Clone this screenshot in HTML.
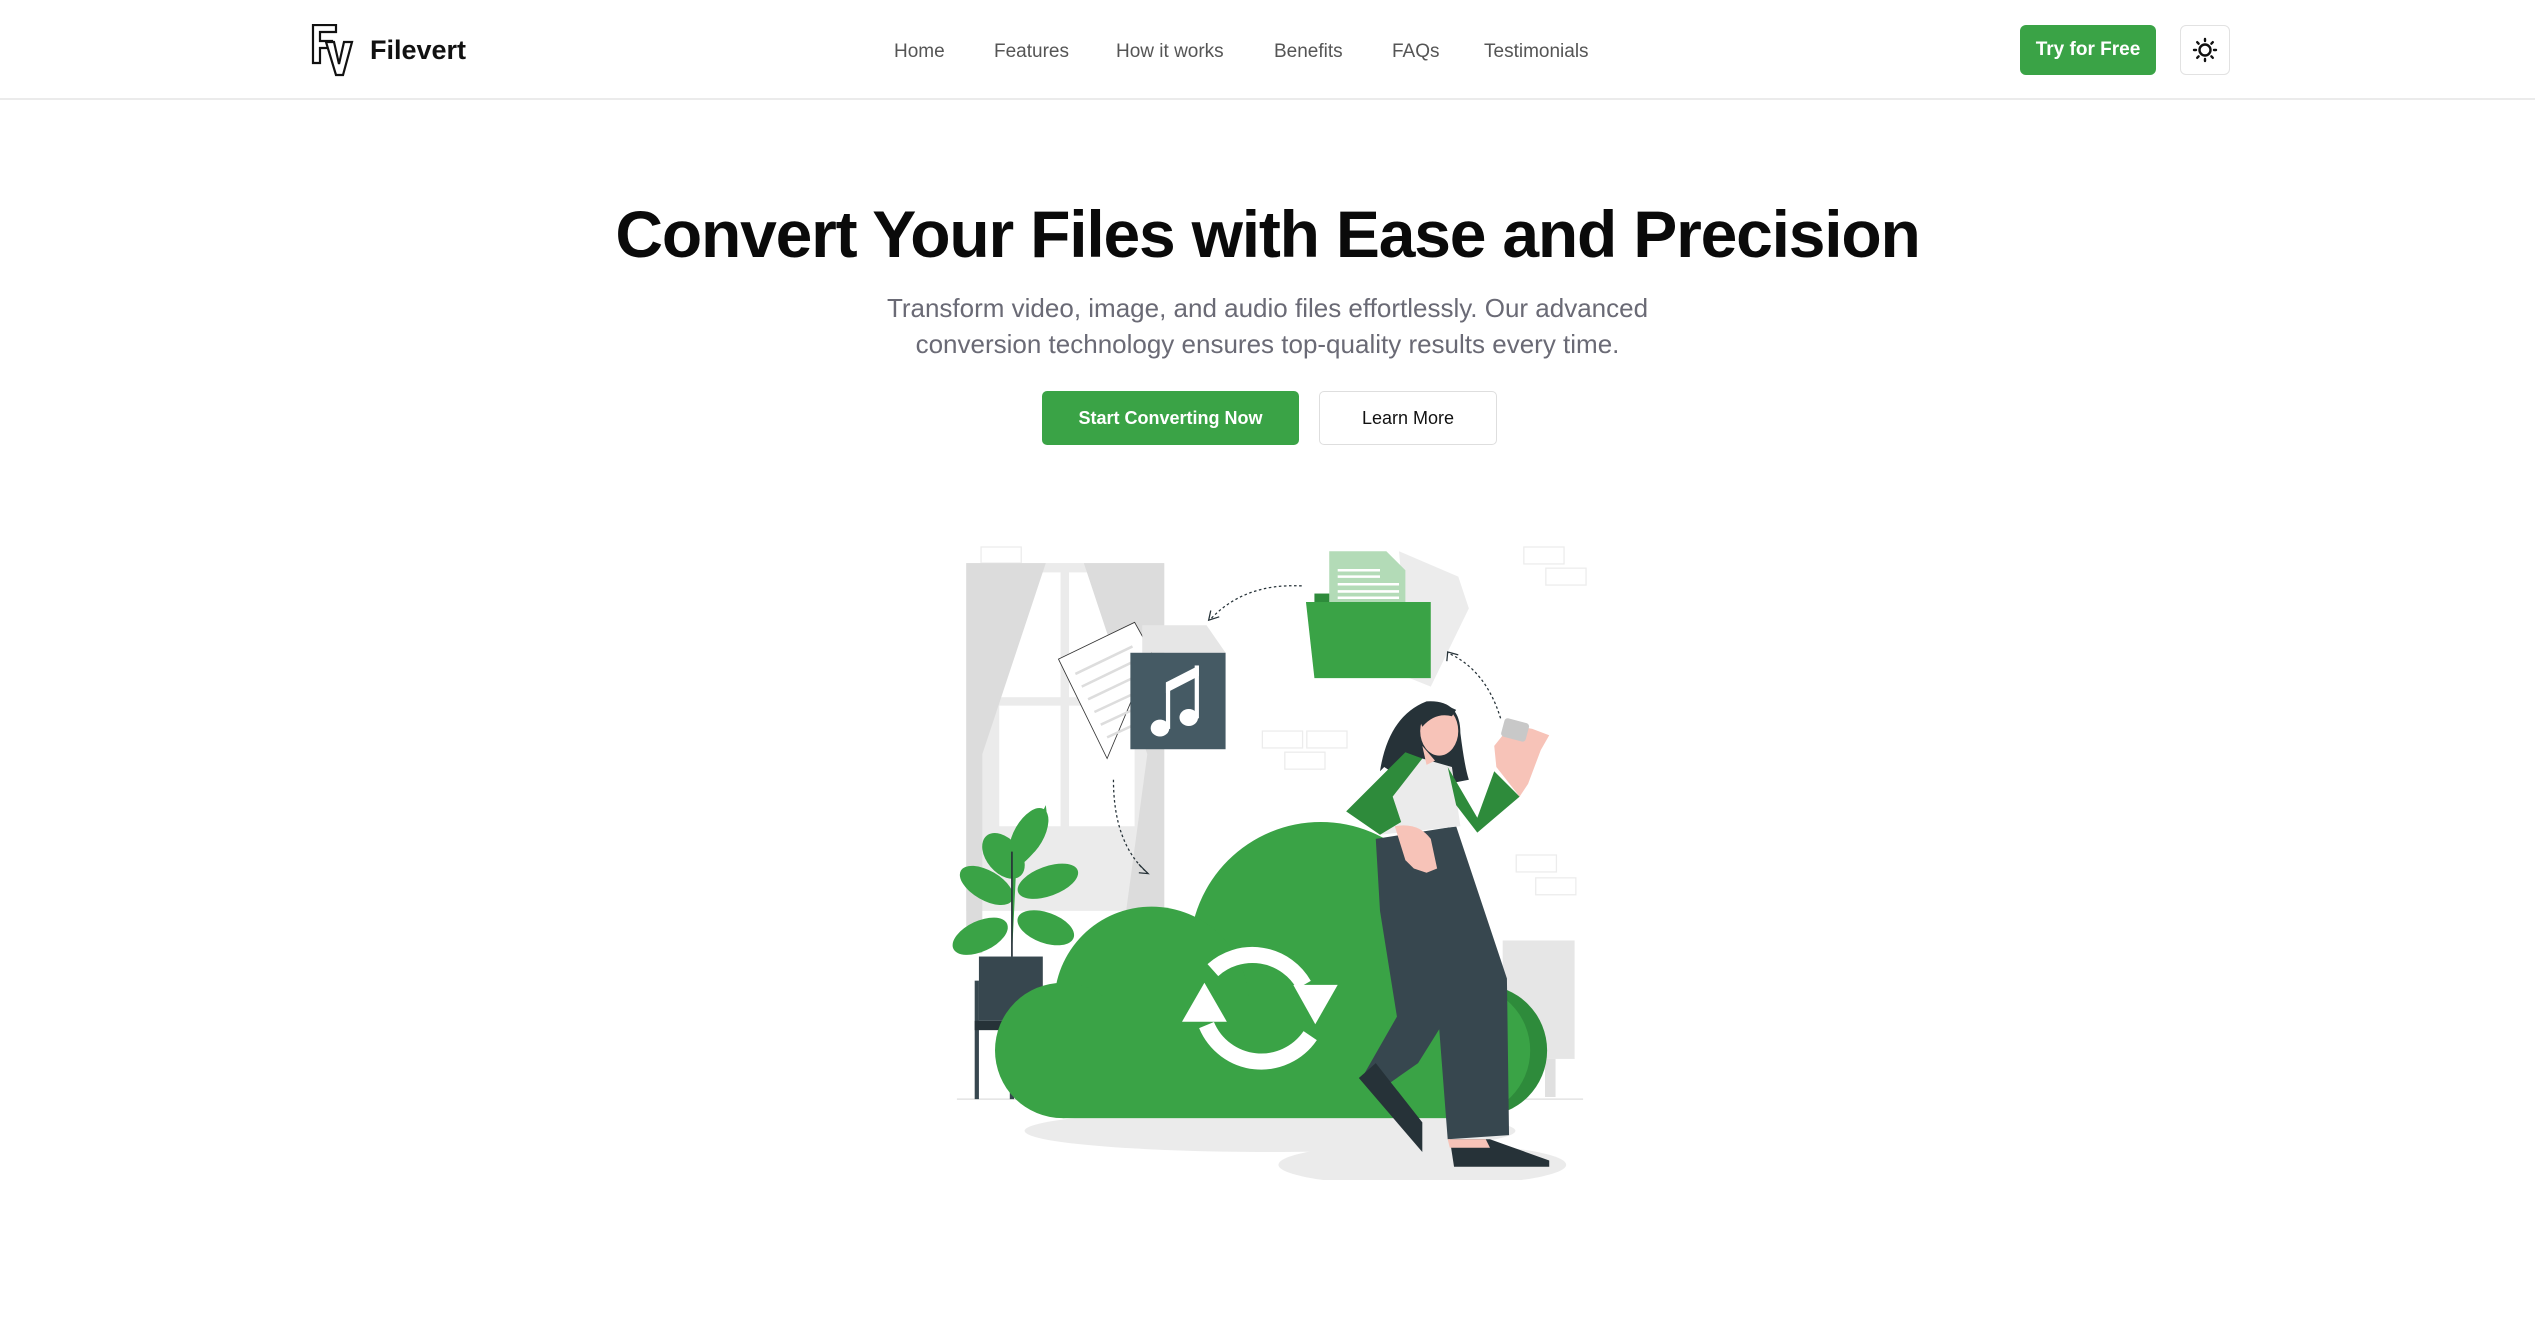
<!DOCTYPE html>
<html><head><meta charset="utf-8"><style>
*{margin:0;padding:0;box-sizing:border-box}
body{width:2535px;height:1324px;background:#fff;font-family:"Liberation Sans",sans-serif;position:relative;overflow:hidden}
.hdr{position:absolute;left:0;top:0;width:2535px;height:100px;border-bottom:2px solid #ebebeb}
.brand{position:absolute;left:370px;top:35px;font-size:27px;font-weight:bold;color:#111}
.nav a{position:absolute;top:41px;font-size:19px;color:#555;text-decoration:none}
.try{position:absolute;left:2020px;top:25px;width:136px;height:50px;background:#3aa346;border-radius:6px;color:#fff;font-size:19px;font-weight:bold;text-align:center;line-height:50px}
.theme{position:absolute;left:2180px;top:25px;width:50px;height:50px;border:1px solid #e2e2e2;border-radius:6px}
h1{position:absolute;left:0;width:2535px;top:196px;text-align:center;font-size:66px;font-weight:900;color:#0a0a0a;letter-spacing:-1.2px}
.sub{position:absolute;left:0;width:2535px;top:290px;text-align:center;font-size:26px;line-height:36px;color:#6a6a75}
.b1{position:absolute;left:1042px;top:391px;width:257px;height:54px;background:#3aa346;border-radius:5px;color:#fff;font-size:18px;text-align:center;line-height:54px;font-weight:bold}
.b2{position:absolute;left:1319px;top:391px;width:178px;height:54px;border:1px solid #dedede;border-radius:5px;color:#111;font-size:18px;text-align:center;line-height:52px}
</style></head><body>
<div class="hdr">
<svg style="position:absolute;left:310px;top:24px" width="50" height="54" viewBox="0 0 50 54"><path d="M3 1H26V8H10V17H22V24H10V39H3Z" fill="#fff" stroke="#111" stroke-width="2.2"/><path d="M16 18H24L29 40L34 18H42L33 51H26Z" fill="#fff" stroke="#111" stroke-width="2.2"/></svg>
<div class="brand">Filevert</div>
<div class="nav"><a style="left:894px">Home</a><a style="left:994px">Features</a><a style="left:1116px">How it works</a><a style="left:1274px">Benefits</a><a style="left:1392px">FAQs</a><a style="left:1484px">Testimonials</a></div>
<div class="try">Try for Free</div>
<div class="theme"><svg width="48" height="48" viewBox="0 0 48 48"><circle cx="24" cy="24" r="5.5" fill="none" stroke="#111" stroke-width="2.4"/><g stroke="#111" stroke-width="2.4" stroke-linecap="round"><path d="M24 13v2M24 33v2M13 24h2M33 24h2M16.2 16.2l1.4 1.4M30.4 30.4l1.4 1.4M16.2 31.8l1.4-1.4M30.4 17.6l1.4-1.4"/></g></svg></div>
</div>
<h1>Convert Your Files with Ease and Precision</h1>
<div class="sub">Transform video, image, and audio files effortlessly. Our advanced<br>conversion technology ensures top-quality results every time.</div>
<div class="b1">Start Converting Now</div>
<div class="b2">Learn More</div>

<svg style="position:absolute;left:940px;top:530px" width="660" height="650" viewBox="0 0 1560 1536">
<g fill="none" stroke="#ececec" stroke-width="3">
<rect x="97" y="40" width="95" height="38"/><rect x="1380" y="40" width="95" height="40"/><rect x="1432" y="90" width="95" height="40"/>
<rect x="762" y="475" width="95" height="40"/><rect x="867" y="475" width="95" height="40"/><rect x="815" y="525" width="95" height="40"/>
<rect x="1362" y="768" width="95" height="40"/><rect x="1408" y="822" width="95" height="40"/>
</g>
<rect x="62" y="78" width="468" height="822" fill="#ebebeb"/>
<g fill="#fff"><rect x="140" y="100" width="145" height="295"/><rect x="305" y="100" width="155" height="295"/><rect x="140" y="415" width="145" height="285"/><rect x="305" y="415" width="155" height="285"/></g>
<path d="M62 78H250L100 530V1000H62Z" fill="#dcdcdc"/><path d="M340 78H530V900H440L490 530Z" fill="#dcdcdc"/>
<rect x="1330" y="970" width="170" height="280" fill="#e6e6e6"/><rect x="1430" y="1250" width="25" height="90" fill="#e0e0e0"/>
<line x1="40" y1="1345" x2="1520" y2="1345" stroke="#ddd" stroke-width="3"/>
<ellipse cx="780" cy="1420" rx="580" ry="50" fill="#ebebeb"/><ellipse cx="1140" cy="1500" rx="340" ry="50" fill="#ebebeb"/>
<rect x="82" y="1065" width="10" height="280" fill="#37474f"/><rect x="165" y="1065" width="10" height="280" fill="#37474f"/><rect x="82" y="1160" width="170" height="22" fill="#263238"/>
<rect x="92" y="1008" width="151" height="152" fill="#37474f"/>
<g fill="#3aa346"><path d="M170 1008V820L250 650Q265 740 180 800" /><ellipse cx="150" cy="770" rx="40" ry="62" transform="rotate(-40 150 770)"/><ellipse cx="210" cy="720" rx="35" ry="70" transform="rotate(30 210 720)"/><ellipse cx="110" cy="840" rx="70" ry="35" transform="rotate(30 110 840)"/><ellipse cx="255" cy="830" rx="75" ry="35" transform="rotate(-20 255 830)"/><ellipse cx="95" cy="960" rx="70" ry="36" transform="rotate(-25 95 960)"/><ellipse cx="250" cy="940" rx="70" ry="36" transform="rotate(20 250 940)"/></g>
<path d="M170 1008V760" stroke="#263238" stroke-width="4"/>
<g fill="#3aa346"><circle cx="1280" cy="1230" r="155" fill="#2e8b3b"/><circle cx="900" cy="1000" r="310"/><circle cx="500" cy="1120" r="230"/><circle cx="290" cy="1230" r="160"/><circle cx="1240" cy="1230" r="155"/><rect x="290" y="1100" width="990" height="290"/></g>
<g fill="none" stroke="#fff" stroke-width="38"><path d="M645 1040A140 140 0 0 1 860 1075"/><path d="M875 1195A140 140 0 0 1 630 1170"/></g>
<g fill="#fff"><path d="M835 1075H940L887 1168Z"/><path d="M572 1162H678L625 1070Z"/></g>
<path d="M280 305L460 218L500 290L395 540Z" fill="#fff" stroke="#333" stroke-width="2"/>
<g stroke="#ddd" stroke-width="6"><path d="M320 340L455 275M335 370L455 312M350 400L455 350M365 430L455 388M380 460L455 425M395 490L455 462"/></g>
<path d="M478 225H630L675 290H478Z" fill="#e6e6e6"/>
<rect x="450" y="290" width="225" height="228" fill="#455a64"/>
<g fill="#fff"><ellipse cx="520" cy="468" rx="22" ry="20"/><ellipse cx="588" cy="443" rx="22" ry="20"/><rect x="534" y="360" width="10" height="110"/><rect x="602" y="320" width="10" height="125"/><path d="M534 360L612 320V345L534 385Z"/></g>
<path d="M1085 50L1225 110L1250 185L1160 370L1110 350Z" fill="#ececec"/>
<rect x="885" y="150" width="70" height="25" fill="#2e8b3b"/>
<path d="M920 50H1055L1100 95V185H920Z" fill="#b3dbb7"/>
<g stroke="#fff" stroke-width="6"><path d="M940 95H1040M940 110H1040M940 128H1085M940 145H1085M940 160H1085"/></g>
<path d="M865 170H1160V350H885Z" fill="#3aa346"/>
<g fill="none" stroke="#263238" stroke-width="3" stroke-dasharray="6 6"><path d="M855 132Q720 125 640 210"/><path d="M410 590Q410 740 490 810"/><path d="M1325 445Q1290 330 1200 290"/></g>
<g fill="none" stroke="#263238" stroke-width="3"><path d="M640 190L635 213L660 205"/><path d="M470 790L492 812L470 810"/><path d="M1198 310L1200 288L1225 295"/></g>
<path d="M1040 570Q1060 440 1150 405Q1230 400 1230 480Q1240 560 1250 590L1200 600Q1120 610 1050 560Z" fill="#263238"/>
<path d="M1030 730L1220 700L1340 1060L1345 1430L1200 1440L1180 1180L1130 1260L1030 1330L1000 1290L1080 1150L1040 900Z" fill="#37474f"/>
<path d="M990 1295L1030 1260L1140 1400L1140 1470Z" fill="#263238"/><path d="M1205 1440H1300L1440 1490V1505H1215Z" fill="#263238"/>
<path d="M1200 1440H1290L1300 1460H1205Z" fill="#f7c3b8"/>
<path d="M1060 620L1140 540L1210 560L1230 700L1040 720Z" fill="#ebebeb"/>
<path d="M960 665L1100 525L1140 540L1070 630L1090 690L1040 720Z" fill="#2e8b3b"/>
<path d="M1200 560L1270 680L1310 570L1370 630L1270 715L1220 650Z" fill="#2e8b3b"/>
<path d="M1075 700Q1130 690 1160 730L1175 800L1150 810L1120 800L1100 780Z" fill="#f7c3b8"/>
<path d="M1315 560L1310 510L1350 460L1400 470L1440 485L1420 520L1390 600L1370 630Z" fill="#f7c3b8"/>
<rect x="1330" y="450" width="60" height="45" rx="8" fill="#c8c8c8" transform="rotate(15 1360 470)"/>
<ellipse cx="1180" cy="475" rx="45" ry="58" fill="#f7c3b8"/><path d="M1140 510L1170 545L1150 555Z" fill="#f7c3b8"/>
<path d="M1130 440Q1160 395 1220 425L1210 440Q1170 430 1140 465Z" fill="#263238"/>
</svg>
</body></html>
